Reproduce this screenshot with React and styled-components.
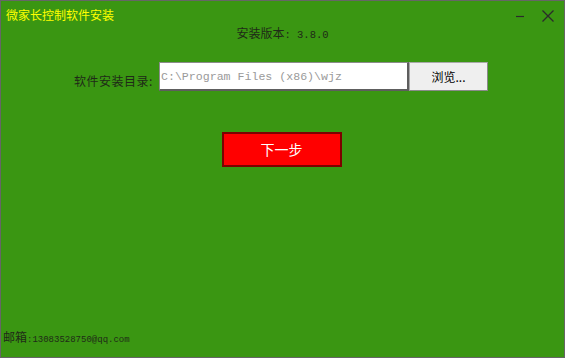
import styled, { createGlobalStyle } from "styled-components";

const GlobalStyle = createGlobalStyle`
  html, body {
    margin: 0;
    padding: 0;
    background: #3a9612;
  }
  * {
    box-sizing: border-box;
  }
`;

const Window = styled.div`
  width: 565px;
  height: 358px;
  display: flex;
  flex-direction: column;
  background: #3a9612;
  border: 1px solid #666666;
  font-family: "Noto Sans CJK SC", "Liberation Sans", sans-serif;
  font-size: 12px;
  color: #1f2a18;
`;

const TitleBar = styled.div`
  height: 24px;
  padding: 6px 9px 0 5px;
  display: flex;
  justify-content: space-between;
  align-items: flex-start;
`;

const Title = styled.div`
  color: #ffff00;
  line-height: 16px;
`;

const Controls = styled.div`
  display: flex;
  gap: 12px;
  padding-top: 2px;
`;

const IconButton = styled.button`
  width: 14px;
  height: 14px;
  padding: 0;
  border: none;
  background: transparent;
  display: flex;
  align-items: center;
  justify-content: center;
  cursor: pointer;
`;

const Version = styled.div`
  text-align: center;
  line-height: 16px;
`;

const Mono = styled.span`
  font-family: "Liberation Mono", monospace;
  font-size: ${(p) => p.$size || 10.5}px;
`;

const DirRow = styled.div`
  margin-top: 19px;
  display: flex;
  padding-left: 73px;
  height: 29px;
`;

const Label = styled.label`
  width: 79px;
  line-height: 16px;
  padding-top: 11px;
  margin-right: 6px;
  letter-spacing: 0.5px;
`;

const PathInput = styled.input`
  width: 250px;
  height: 29px;
  padding: 0 1px;
  background: #ffffff;
  border: 1px solid #8c8c8c;
  border-right: 2px solid #5e5e5e;
  border-bottom: 2px solid #5e5e5e;
  font-family: "Liberation Mono", monospace;
  font-size: 11.6px;
  color: #9a9a9a;
  outline: none;
`;

const BrowseButton = styled.button`
  width: 79px;
  height: 29px;
  padding: 0;
  background: #efefef;
  border: 1px solid #a8a8a8;
  border-right-color: #8a8a8a;
  border-bottom-color: #8a8a8a;
  font-family: "Noto Sans CJK SC", sans-serif;
  font-size: 12px;
  color: #000;
`;

const NextButton = styled.button`
  align-self: center;
  margin-top: 41px;
  margin-right: 2px;
  width: 120px;
  height: 35px;
  padding: 0 0 2px;
  background: #ff0000;
  border: 2px solid #7d0000;
  color: #ffffff;
  font-family: "Noto Sans CJK SC", sans-serif;
  font-size: 14px;
`;

const Spacer = styled.div`
  flex: 1;
`;

const Footer = styled.div`
  padding: 0 0 9px 2px;
  line-height: 16px;
`;

function MinimizeIcon() {
  return (
    <svg width="12" height="12" viewBox="0 0 12 12">
      <line x1="0" y1="6.5" x2="8" y2="6.5" stroke="#2b2b2b" strokeWidth="1.2" />
    </svg>
  );
}

function CloseIcon() {
  return (
    <svg width="14" height="14" viewBox="0 0 14 14">
      <path d="M1.5 1.5 L12.5 12.5 M12.5 1.5 L1.5 12.5" stroke="#2b2b2b" strokeWidth="1.3" />
    </svg>
  );
}

export default function App() {
  return (
    <>
      <GlobalStyle />
      <Window>
        <TitleBar>
          <Title>微家长控制软件安装</Title>
          <Controls>
            <IconButton aria-label="最小化">
              <MinimizeIcon />
            </IconButton>
            <IconButton aria-label="关闭">
              <CloseIcon />
            </IconButton>
          </Controls>
        </TitleBar>

        <Version>
          安装版本<Mono>: 3.8.0</Mono>
        </Version>

        <DirRow>
          <Label htmlFor="dir">软件安装目录:</Label>
          <PathInput id="dir" defaultValue="C:\Program Files (x86)\wjz" readOnly />
          <BrowseButton>浏览...</BrowseButton>
        </DirRow>

        <NextButton>下一步</NextButton>

        <Spacer />

        <Footer>
          邮箱<Mono $size={9}>:13083528750@qq.com</Mono>
        </Footer>
      </Window>
    </>
  );
}
